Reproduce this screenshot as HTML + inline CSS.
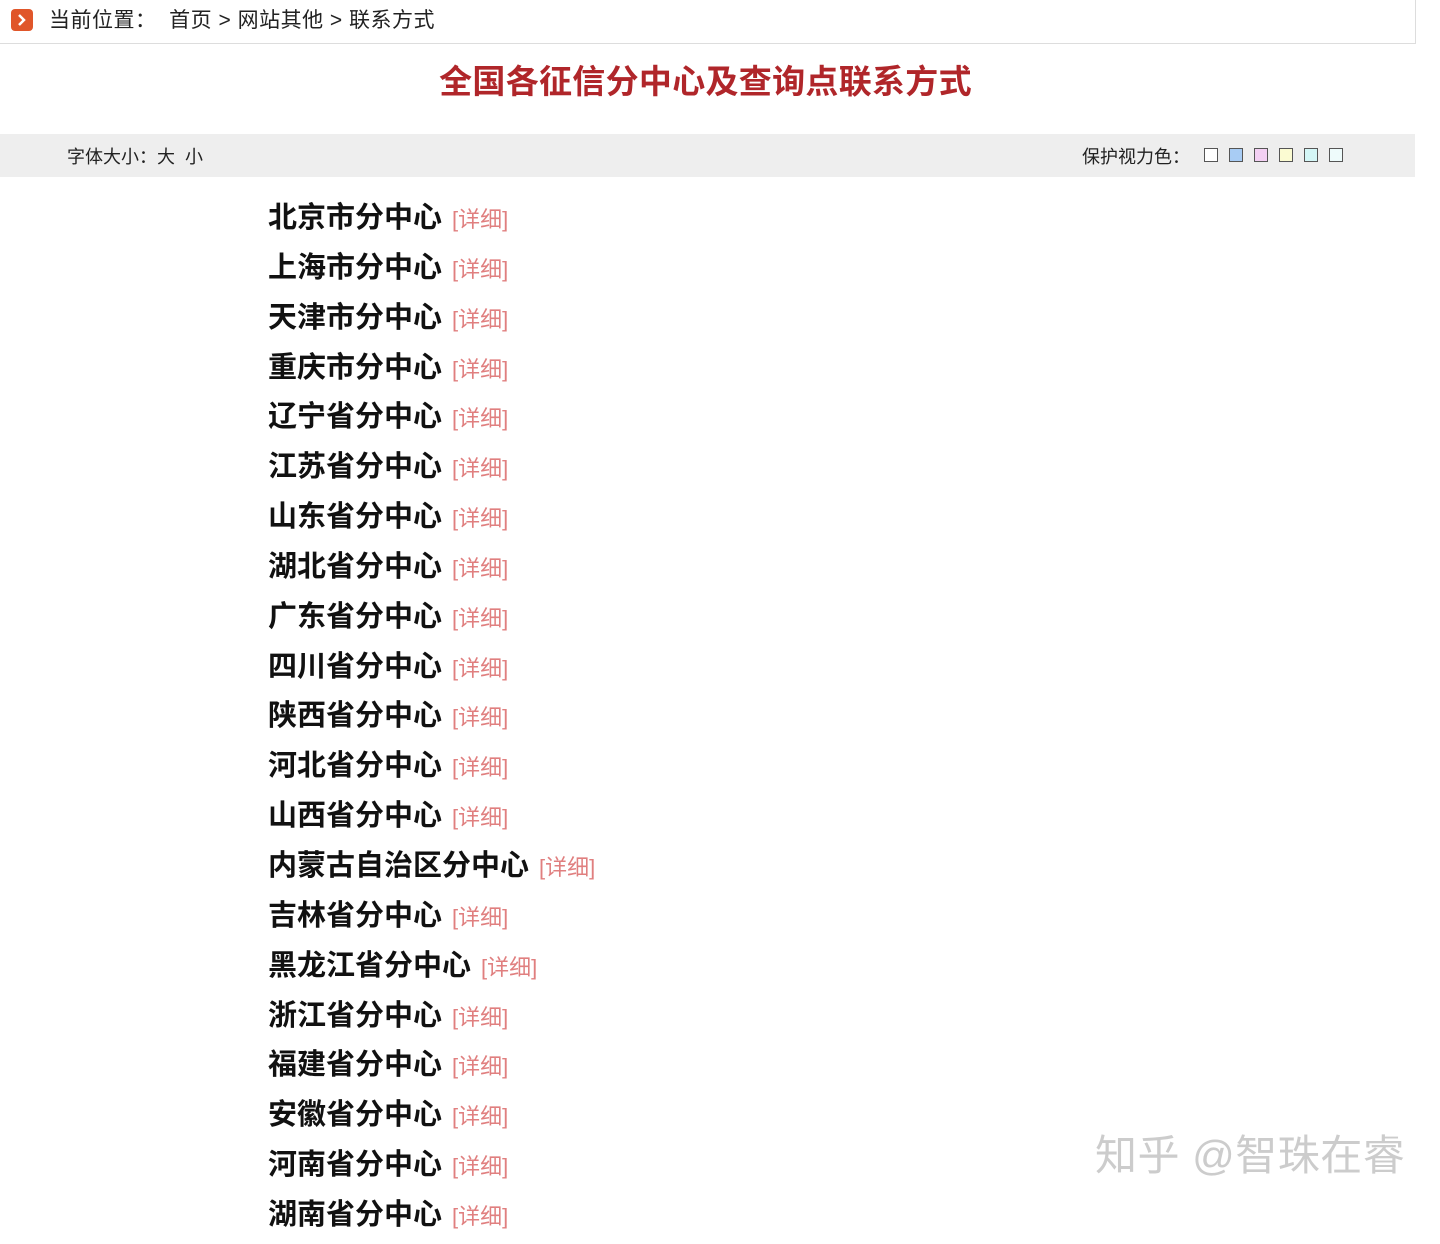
<!DOCTYPE html>
<html><head><meta charset="utf-8"><style>
body{margin:0;background:#fff;font-family:"Liberation Sans","Noto Sans CJK SC",sans-serif;width:1440px;height:1211px;overflow:hidden;position:relative}
.top{position:absolute;left:0;top:0;width:1415px;height:43px;border-bottom:1px solid #ddd;border-right:1px solid #ddd}
.ico{position:absolute;left:11px;top:9px;width:22px;height:22px;background:#e0562a;border-radius:4px}
.bc{position:absolute;left:49px;top:4px;font-size:21px;color:#222;white-space:pre;letter-spacing:0.5px}
h1{position:absolute;left:0;width:1411px;top:61px;margin:0;text-align:center;font-size:33px;line-height:42px;color:#b0262a;font-weight:bold;letter-spacing:0.3px}
.bar{position:absolute;left:0;top:134px;width:1415px;height:43px;background:#eee;font-size:18px;color:#222}
.fs{position:absolute;left:67px;top:9px;white-space:pre}
.pc{position:absolute;left:1082px;top:9px}
.sw{position:absolute;top:14px;width:12px;height:12px;border:1px solid #555}
.list{position:absolute;left:268px;top:197px}
.it{height:49.85px;font-size:29px;font-weight:bold;color:#111;line-height:42px;white-space:nowrap}
.it span{font-size:22px;font-weight:normal;color:#e07f7f;margin-left:10px}
.wm{position:absolute;left:1095px;top:1122px;font-size:42px;color:#ccc;letter-spacing:0.5px}
</style></head><body>
<div class="top"><div class="ico"><svg width="22" height="22" viewBox="0 0 22 22"><path d="M8 6 L13 11 L8 16" fill="none" stroke="#fff" stroke-width="2.5"/></svg></div><div class="bc">当前位置：  首页 &gt; 网站其他 &gt; 联系方式</div></div>
<h1>全国各征信分中心及查询点联系方式</h1>
<div class="bar"><div class="fs">字体大小：大  小</div><div class="pc">保护视力色：</div>
<div class="sw" style="left:1204px;background:#fff"></div>
<div class="sw" style="left:1229px;background:#a8ccf4"></div>
<div class="sw" style="left:1254px;background:#f3d0f3"></div>
<div class="sw" style="left:1279px;background:#fbfbd2"></div>
<div class="sw" style="left:1304px;background:#d4f6f6"></div>
<div class="sw" style="left:1329px;background:#eefbfb"></div>
</div>
<div class="list">
<div class="it">北京市分中心<span>[详细]</span></div>
<div class="it">上海市分中心<span>[详细]</span></div>
<div class="it">天津市分中心<span>[详细]</span></div>
<div class="it">重庆市分中心<span>[详细]</span></div>
<div class="it">辽宁省分中心<span>[详细]</span></div>
<div class="it">江苏省分中心<span>[详细]</span></div>
<div class="it">山东省分中心<span>[详细]</span></div>
<div class="it">湖北省分中心<span>[详细]</span></div>
<div class="it">广东省分中心<span>[详细]</span></div>
<div class="it">四川省分中心<span>[详细]</span></div>
<div class="it">陕西省分中心<span>[详细]</span></div>
<div class="it">河北省分中心<span>[详细]</span></div>
<div class="it">山西省分中心<span>[详细]</span></div>
<div class="it">内蒙古自治区分中心<span>[详细]</span></div>
<div class="it">吉林省分中心<span>[详细]</span></div>
<div class="it">黑龙江省分中心<span>[详细]</span></div>
<div class="it">浙江省分中心<span>[详细]</span></div>
<div class="it">福建省分中心<span>[详细]</span></div>
<div class="it">安徽省分中心<span>[详细]</span></div>
<div class="it">河南省分中心<span>[详细]</span></div>
<div class="it">湖南省分中心<span>[详细]</span></div>
</div>
<div class="wm">知乎 @智珠在睿</div>
</body></html>
